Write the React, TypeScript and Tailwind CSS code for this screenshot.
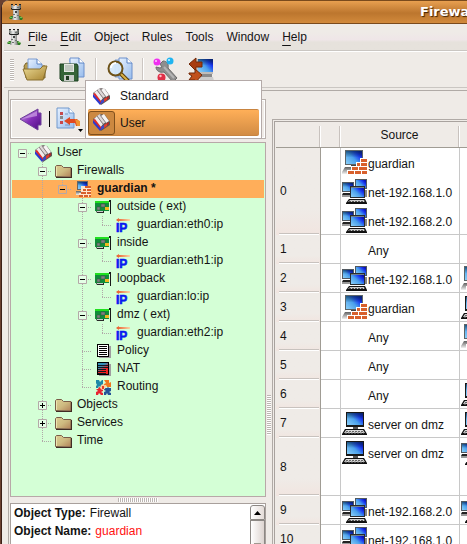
import React from "react";

/* ---------- shared gradients for the icon set ---------- */

function IconDefs() {
  return (
    <svg width="0" height="0" className="absolute" aria-hidden="true">
      <defs>
        <linearGradient id="screen" x1="0" y1="1" x2="1" y2="0.200">
          <stop offset="0" stopColor="#8cd0f8" />
          <stop offset="0.5" stopColor="#4aa0ec" />
          <stop offset="0.8" stopColor="#1838f0" />
          <stop offset="1" stopColor="#0a10b0" />
        </linearGradient>
        <linearGradient id="shade" x1="0" y1="0" x2="0" y2="1">
          <stop offset="0" stopColor="#083048" stopOpacity="0.65" />
          <stop offset="0.5" stopColor="#083048" stopOpacity="0" />
        </linearGradient>
        <linearGradient id="fade" x1="0" y1="0" x2="0" y2="1">
          <stop offset="0" stopColor="#606060" />
          <stop offset="1" stopColor="#f0f0f0" />
        </linearGradient>
        <linearGradient id="folderFill" x1="0" y1="0" x2="1" y2="1">
          <stop offset="0" stopColor="#dccf94" />
          <stop offset="0.5" stopColor="#ceba80" />
          <stop offset="1" stopColor="#b08058" />
        </linearGradient>
        <linearGradient id="gold" x1="0" y1="0" x2="1" y2="1">
          <stop offset="0" stopColor="#ecdc98" />
          <stop offset="1" stopColor="#a88430" />
        </linearGradient>
        <linearGradient id="paper" x1="0" y1="0" x2="1" y2="1">
          <stop offset="0" stopColor="#e8f2ff" />
          <stop offset="1" stopColor="#98bcec" />
        </linearGradient>
        <linearGradient id="purple" x1="0" y1="0" x2="1" y2="1">
          <stop offset="0" stopColor="#d8b0f0" />
          <stop offset="0.5" stopColor="#8430b8" />
          <stop offset="1" stopColor="#4c0c80" />
        </linearGradient>
        <linearGradient id="arrow" x1="0" y1="0" x2="1" y2="0">
          <stop offset="0" stopColor="#e85020" />
          <stop offset="1" stopColor="#f8d8a8" />
        </linearGradient>
        <linearGradient id="nat" x1="0" y1="0" x2="0.6" y2="1">
          <stop offset="0.35" stopColor="#3090b8" />
          <stop offset="0.7" stopColor="#f02020" />
        </linearGradient>
        <linearGradient id="stone" x1="0" y1="0" x2="1" y2="0">
          <stop offset="0" stopColor="#707470" />
          <stop offset="0.4" stopColor="#f0f0f0" />
          <stop offset="1" stopColor="#505450" />
        </linearGradient>
      </defs>
    </svg>
  );
}

/* ---------- icons ---------- */

function TowerIcon() {
  return (
    <svg width="14" height="18" viewBox="0 0 14 18" aria-hidden="true" className="shrink-0">
      <path d="M0 15l2-2h3v3H1zM9 13h2l3 2-1 2H9z" fill="#2e7c24" />
      <path d="M2 1h2v2h2V1h2v2h2V1h2v5l-2 1v6l1 4H3l1-4V7L2 6z" fill="url(#stone)" />
      <path d="M2 1h2v1H2zM6 1h2v1H6zM10 1h2v1h-2zM2 5h1v1h8V5h1v1l-1 1H3L2 6z" fill="#222" />
      <path d="M6 8h2v2H6z" fill="#444" />
      <path d="M4 11h2v1H4zM8 12h2v1H8zM5 14h2v1H5zM8 4h2v1H8z" fill="#707470" />
      <path d="M1 14h2v1H1zM11 14h2v1h-2z" fill="#6cc050" />
    </svg>
  );
}

function OpenIcon() {
  return (
    <svg width="26" height="26" viewBox="0 0 26 26" aria-hidden="true">
      <path d="M2 9l2-3h6l1 3h12v12H4z" fill="#b89c50" stroke="#7a6428" />
      <path d="M6 2h9l5 5v8H6z" fill="url(#paper)" stroke="#7c9cd0" />
      <path d="M15 2v5h5" fill="#fff" stroke="#5c84c4" />
      <path d="M1 12h17l3-3h4l-4 14H5z" fill="url(#gold)" stroke="#8a7030" />
    </svg>
  );
}

function SaveIcon() {
  return (
    <svg width="26" height="26" viewBox="0 0 26 26" aria-hidden="true">
      <path d="M10 2h3v3h-3z" fill="#aac8f0" />
      <path d="M11 1h9l5 5v14H11z" fill="url(#paper)" stroke="#6c90cc" />
      <path d="M20 1v5h5" fill="#fff" stroke="#5c84c4" />
      <path d="M1 7h17l1 2v15H3l-2-2z" fill="#356438" stroke="#1c4020" />
      <path d="M5 7h10v8H5z" fill="#e4e8e4" />
      <path d="M6 9h8M6 11h8M6 13h8" stroke="#9ca89c" />
      <path d="M5 18h10v6H5z" fill="#c8ccc8" />
      <path d="M7 19h3v4H7z" fill="#223c24" />
    </svg>
  );
}

function FindIcon() {
  return (
    <svg width="26" height="26" viewBox="0 0 26 26" aria-hidden="true">
      <path d="M8 3h8v17H8z" fill="#b0ccf0" stroke="#7c9cd0" />
      <path d="M12 1h8l5 5v16H12z" fill="url(#paper)" stroke="#6c90cc" />
      <path d="M20 1v5h5" fill="#fff" stroke="#5c84c4" />
      <path d="M14 17l7 7" stroke="#5a4010" strokeWidth="4" strokeLinecap="round" />
      <path d="M14 17l6 6" stroke="#d8b048" strokeWidth="2" strokeLinecap="round" />
      <circle cx="8.500" cy="11.500" r="7" fill="#d4e8fc" fillOpacity="0.92" stroke="#6e5218" strokeWidth="2" />
      <path d="M4 11a5 5 0 0 1 5-5" stroke="#fff" strokeWidth="2" fill="none" />
    </svg>
  );
}

function WrenchIcon() {
  return (
    <svg width="26" height="26" viewBox="0 0 26 26" aria-hidden="true">
      <path d="M7 7l3-3c4 0 6 3 5 7l9 10-4 4-9-10c-4 1-8-1-8-5l4 1 2-1z" fill="#8e8e8e" stroke="#6c6c6c" />
      <path d="M11 10l10 11" stroke="#b4b4b4" strokeWidth="2" />
      <circle cx="4" cy="5" r="3.500" fill="#f030f0" />
      <circle cx="3" cy="4" r="1" fill="#ffc8ff" />
      <circle cx="17" cy="4" r="3.500" fill="#20b4f0" />
      <circle cx="16" cy="3" r="1" fill="#d0f4ff" />
      <circle cx="8.500" cy="20.500" r="4" fill="#e03048" />
      <circle cx="7.500" cy="19" r="1.200" fill="#ffc0c8" />
    </svg>
  );
}

function InstallIcon() {
  return (
    <svg width="26" height="26" viewBox="0 0 26 26" aria-hidden="true">
      <path d="M9 2h16v15H9z" fill="#c0bcb8" />
      <path d="M10 2h15v13H10z" fill="url(#screen)" />
      <path d="M10 2h15v13H10z" fill="url(#shade)" />
      <path d="M10 17h14v3H10z" fill="#8a8a8a" />
      <path d="M12 20h13l1 4H12z" fill="#ccc" />
      <path d="M1 7l7-6v4h6v5H8v4z" fill="#a83c10" stroke="#702808" />
      <path d="M14 18l-7-6v4H1v1l3 2-3 4h6v3z" fill="#c0501c" stroke="#702808" />
    </svg>
  );
}

function BackIcon() {
  return (
    <svg width="24" height="24" viewBox="0 0 24 24" aria-hidden="true">
      <path d="M1 12L19 2v4h3v12h-3v5z" fill="url(#purple)" stroke="#6c4098" />
      <path d="M3 12L18 4v5z" fill="#d8b4ec" fillOpacity="0.600" />
    </svg>
  );
}

function NewObjectIcon() {
  return (
    <svg width="26" height="26" viewBox="0 0 26 26" aria-hidden="true">
      <path d="M1 2h12l5 5v15H1z" fill="url(#paper)" stroke="#7098cc" />
      <path d="M13 2v5h5" fill="#fff" stroke="#7098cc" />
      <path d="M4 6h3v3H4zM4 15h3v3H4z" fill="#c8484c" />
      <path d="M4 10h3v3H4z" fill="#888" />
      <path d="M9 8h3M9 19h5" stroke="#7898c0" />
      <path d="M8 15l6-4v2h7l3 3v4h-4l-1-3h-5v2z" fill="#e04820" />
      <path d="M19 13l5 2v5h-3z" fill="#ee9430" />
    </svg>
  );
}

function BooksIcon() {
  return (
    <svg width="17" height="17" viewBox="0 0 17 17" aria-hidden="true" className="shrink-0">
      <path d="M0 5l7 11 1 1 9-6V8l-5-7-5-1z" fill="#5c5454" />
      <path d="M1 5l3-3 6 8-3 4z" fill="#f0ecec" />
      <path d="M4 2l3-2 6 8-3 2z" fill="#ded8d8" />
      <path d="M8 2l3-2 5 7-3 2z" fill="#f6f4f4" />
      <path d="M4 2l6 8M7 1l6 8" stroke="#8a8080" />
      <path d="M0 6l2-1 6 8v3z" fill="#e02828" />
      <path d="M0 9l7 8 1-2-8-9z" fill="#2c38d0" />
      <path d="M8 13l3-2v3l-3 2z" fill="#4048c8" />
      <path d="M11 11l3-2v3l-3 2z" fill="#e03c2c" />
      <path d="M14 9l2-1v2l-2 2z" fill="#b02828" />
    </svg>
  );
}

function FolderIcon() {
  return (
    <svg width="17" height="14" viewBox="0 0 17 14" aria-hidden="true">
      <path d="M0.500 12.500v-10l1-1h5l2 2h7.500v9.500z" fill="url(#folderFill)" stroke="#7a5c48" />
      <path d="M1.500 3v9" stroke="#ece4b0" />
      <path d="M1 13.500h16M16.500 4v10" stroke="#402c24" />
    </svg>
  );
}

function Bricks() {
  return (
    <g fill="#d8602c">
      <path d="M19 9h6v3h-6zM15 13h3v3h-3zM19 13h6v3h-6zM10 17h6v3h-6zM17 17h8v3h-8zM6 21h6v3H6zM13 21h6v3h-6zM20 21h5v3h-5z" />
    </g>
  );
}

function SmallFirewallIcon() {
  return (
    <svg width="15" height="16" viewBox="0 0 15 16" aria-hidden="true">
      <path d="M1 0h11v9H1z" fill="#666" />
      <path d="M2 1h9v7H2z" fill="url(#screen)" />
      <path d="M2 1h9v7H2z" fill="url(#shade)" />
      <path d="M0 10h9v4H0z" fill="url(#fade)" />
      <path d="M5 5h10v11H3v-4h2z" fill="#ffe6cc" />
      <path d="M9 5h6v2H9zM7 8h3v2H7zM11 8h4v2h-4zM5 11h5v2H5zM11 11h4v2h-4zM3 14h4v2H3zM8 14h4v2H8zM13 14h2v2h-2z" fill="#d8602c" />
    </svg>
  );
}

function NicIcon() {
  return (
    <svg width="17" height="14" viewBox="0 0 17 14" aria-hidden="true">
      <path d="M0 1h14v10H0z" fill="#108c38" />
      <path d="M0 1h14v2H0z" fill="#20e020" />
      <path d="M2 7h3v3H2zM6 4h4v3H6z" fill="#7c8480" stroke="#404844" strokeWidth="0.500" />
      <path d="M10 7h4v3h-4z" fill="#f0b820" />
      <path d="M1 11h8v2H2z" fill="#282828" />
      <path d="M2 11h6v1H2z" fill="#ccc" />
      <path d="M14 0h2v14h-1V2h-1z" fill="#181818" />
    </svg>
  );
}

function IpIcon() {
  return (
    <svg width="15" height="16" viewBox="0 0 15 16" aria-hidden="true" className="overflow-visible">
      <path d="M0 3l3-2v1h11v2H3v1z" fill="url(#arrow)" />
      <text x="0" y="15" fill="#0818f0" stroke="#0818f0" strokeWidth="0.600" fontFamily="Liberation Sans, sans-serif" fontWeight="700" fontSize="12">
        IP
      </text>
    </svg>
  );
}

function PolicyIcon() {
  return (
    <svg width="14" height="14" viewBox="0 0 14 14" aria-hidden="true">
      <path d="M2 2h12v12H2z" fill="#a09ca0" />
      <path d="M0 0h12v13H0z" fill="#000" />
      <path d="M1 1h10v11H1z" fill="#fff" />
      <path d="M2 2.500h8M2 4.500h8M2 6.500h8M2 8.500h8M2 10.500h8" stroke="#000" />
    </svg>
  );
}

function NatIcon() {
  return (
    <svg width="14" height="14" viewBox="0 0 14 14" aria-hidden="true">
      <path d="M2 2h12v12H2z" fill="#a09ca0" />
      <path d="M0 0h12v13H0z" fill="#000" />
      <path d="M1 1h10v11H1z" fill="url(#nat)" />
      <path d="M1 3.500h10M1 5.500h10M1 7.500h8M1 9.500h8M1 11.500h8" stroke="#101820" />
    </svg>
  );
}

function RoutingIcon() {
  return (
    <svg width="15" height="15" viewBox="0 0 15 15" aria-hidden="true">
      <path d="M0 0h3l1 2 2-2h1v6l-3 1-1-1-1 2H0V6l1-1-1-2z" fill="#1c88a8" />
      <path d="M8 0h5v3l2-1v5h-4l-1-2-2 1V4l2-1z" fill="#f07820" />
      <path d="M0 9h2l1-2 2 1h2v3l-2 1 2 1v2H5l-2-2-1 2H0v-3l2-1z" fill="#e82430" />
      <path d="M8 8h3l1-1 1 1h2v3l-2 1 2 1v2h-3l-1-2-1 2H8v-3l2-1-2-1z" fill="#245498" />
      <path d="M5 5l2-1 3 2-1 3-3 1-2-2z" fill="#f8d0a0" />
      <path d="M6 6h2v3H6z" fill="#e83c28" />
    </svg>
  );
}

function HostIcon() {
  return (
    <svg width="25" height="25" viewBox="0 0 25 25" aria-hidden="true" className="shrink-0">
      <path d="M4 1h18v15H4z" fill="#181818" />
      <path d="M5 2h16v12H5z" fill="url(#screen)" />
      <path d="M5 2h16v12H5z" fill="url(#shade)" />
      <path d="M11 16h5v2h-5z" fill="#555" />
      <path d="M3 18h19l3 5v1H0v-1z" fill="#111" />
      <path d="M4 19h17l2 3H2z" fill="#d8d8d8" />
      <path d="M4 20.500h18" stroke="#666" strokeDasharray="2 1" />
      <path d="M3 22h19" stroke="#888" strokeDasharray="2 1" />
    </svg>
  );
}

function FirewallIcon() {
  return (
    <svg width="25" height="25" viewBox="0 0 25 25" aria-hidden="true" className="shrink-0">
      <path d="M3 0h18v15H3z" fill="#5c6468" />
      <path d="M4 1h16v13H4z" fill="url(#screen)" />
      <path d="M4 1h16v13H4z" fill="url(#shade)" />
      <path d="M9 15h6v2H9z" fill="#444" />
      <path d="M3 17h18l3 7H0v-2z" fill="url(#fade)" />
      <path d="M18 8h7v17H5v-5h4v-4h5v-4h4z" fill="#fff" />
      <Bricks />
    </svg>
  );
}

function NetIcon() {
  return (
    <svg width="25" height="25" viewBox="0 0 25 25" aria-hidden="true" className="shrink-0">
      <path d="M13 0h12v10H13z" fill="#505860" />
      <path d="M14 1h10v8H14z" fill="url(#screen)" />
      <path d="M0 3h12v10H0z" fill="#505860" />
      <path d="M1 4h10v8H1z" fill="url(#screen)" />
      <path d="M1 4h10v8H1z" fill="url(#shade)" />
      <path d="M1 14h9v2H0z" fill="#222" />
      <path d="M0 16h9v2H0z" fill="#999" />
      <path d="M22 11h3v7h-2z" fill="#888" />
      <path d="M8 7h15v12H8z" fill="#282c30" />
      <path d="M9 9h13v9H9z" fill="url(#screen)" />
      <path d="M9 8h13v1H9z" fill="#708088" />
      <path d="M7 20h16l2 4v1H4v-1z" fill="#111" />
      <path d="M8 21h14l1 2H6z" fill="#ccc" />
      <path d="M7 22.500h16" stroke="#555" strokeDasharray="2 1" />
    </svg>
  );
}

/* ---------- window chrome ---------- */

const menus = [
  { label: "File", mnemonic: true },
  { label: "Edit", mnemonic: true },
  { label: "Object", mnemonic: false },
  { label: "Rules", mnemonic: false },
  { label: "Tools", mnemonic: false },
  { label: "Window", mnemonic: false },
  { label: "Help", mnemonic: true },
];

function TitleBar() {
  return (
    <header className="flex h-6 shrink-0 items-center rounded-tl-md border-t border-b border-[#7a4a1c] bg-linear-to-b from-[#e8a050] via-[#bc762e] via-55% to-[#d28a3c] pl-[7px]">
      <TowerIcon />
      <h1 className="ml-auto w-[47px] font-['DejaVu_Sans',sans-serif] text-[13px] leading-5 font-bold whitespace-nowrap text-white [text-shadow:1px_1px_1px_#402000]">
        Firewall
      </h1>
    </header>
  );
}

function MenuBar() {
  return (
    <nav className="flex h-[27px] shrink-0 items-center gap-[13px] border-b border-[#cac6c2] bg-linear-to-b from-[#efebe7] from-30% via-[#efe6e8] via-60% to-[#e6e2dc] to-70% pl-[3px]">
      <span className="-mr-[6px]">
        <TowerIcon />
      </span>
      {menus.map((m) => (
        <button key={m.label} type="button" className="leading-4">
          {m.mnemonic ? (
            <>
              <span className="underline decoration-1 underline-offset-[4px]">{m.label[0]}</span>
              {m.label.slice(1)}
            </>
          ) : (
            m.label
          )}
        </button>
      ))}
    </nav>
  );
}

function Separator() {
  return <span className="h-6 w-[2px] border-l border-[#ccc6c2] bg-white" />;
}

function ToolBar() {
  return (
    <div className="flex h-[37px] shrink-0 items-center border-t border-b border-t-white border-b-[#cac6c2] pl-[6px]">
      <span className="mr-2 h-[22px] w-1 bg-[repeating-linear-gradient(#bcb6b2_0_1px,#fff_1px_2px)]" />
      <button type="button" aria-label="Open"><OpenIcon /></button>
      <button type="button" aria-label="Save" className="ml-[11px]"><SaveIcon /></button>
      <span className="mx-[10px] flex"><Separator /></span>
      <button type="button" aria-label="Find"><FindIcon /></button>
      <span className="mx-[9px] flex"><Separator /></span>
      <button type="button" aria-label="Compile"><WrenchIcon /></button>
      <button type="button" aria-label="Install" className="ml-[9px]"><InstallIcon /></button>
    </div>
  );
}

function LibraryMenu() {
  return (
    <div role="listbox" aria-label="Library" className="absolute top-[80px] left-[83px] flex w-[177px] flex-col border border-[#b4aaa8] bg-white p-[2px]">
      <button type="button" role="option" aria-selected="false" className="flex h-[26px] items-center pl-[5px]">
        <BooksIcon />
        <span className="ml-[10px]">Standard</span>
      </button>
      <button type="button" role="option" aria-selected="true" className="flex h-[27px] items-center rounded-xs border-t border-b border-[#c88440] bg-linear-to-b from-[#ffaf58] to-[#d28c44]">
        <span className="flex h-[24px] w-[27px] items-center justify-center rounded-[3px] border border-[#80501c] bg-[#cc8840]">
          <BooksIcon />
        </span>
        <span className="ml-[5px]">User</span>
      </button>
    </div>
  );
}

/* ---------- object tree ---------- */

type Cell = "blank" | "line" | "tee" | "end" | "minus" | "minusEnd" | "minusRoot" | "plus";
type TreeRow = { cells: Cell[]; icon: React.ReactNode; label: string; selected?: boolean };

const treeRows: TreeRow[] = [
  { cells: ["minusRoot"], icon: <BooksIcon />, label: "User" },
  { cells: ["blank", "minus"], icon: <FolderIcon />, label: "Firewalls" },
  { cells: ["blank", "line", "minusEnd"], icon: <SmallFirewallIcon />, label: "guardian *", selected: true },
  { cells: ["blank", "line", "blank", "minus"], icon: <NicIcon />, label: "outside ( ext)" },
  { cells: ["blank", "line", "blank", "line", "end"], icon: <IpIcon />, label: "guardian:eth0:ip" },
  { cells: ["blank", "line", "blank", "minus"], icon: <NicIcon />, label: "inside" },
  { cells: ["blank", "line", "blank", "line", "end"], icon: <IpIcon />, label: "guardian:eth1:ip" },
  { cells: ["blank", "line", "blank", "minus"], icon: <NicIcon />, label: "loopback" },
  { cells: ["blank", "line", "blank", "line", "end"], icon: <IpIcon />, label: "guardian:lo:ip" },
  { cells: ["blank", "line", "blank", "minus"], icon: <NicIcon />, label: "dmz ( ext)" },
  { cells: ["blank", "line", "blank", "line", "end"], icon: <IpIcon />, label: "guardian:eth2:ip" },
  { cells: ["blank", "line", "blank", "tee"], icon: <PolicyIcon />, label: "Policy" },
  { cells: ["blank", "line", "blank", "tee"], icon: <NatIcon />, label: "NAT" },
  { cells: ["blank", "line", "blank", "end"], icon: <RoutingIcon />, label: "Routing" },
  { cells: ["blank", "plus"], icon: <FolderIcon />, label: "Objects" },
  { cells: ["blank", "plus"], icon: <FolderIcon />, label: "Services" },
  { cells: ["blank", "end"], icon: <FolderIcon />, label: "Time" },
];

function Guide({ kind }: { kind: Cell }) {
  const box = kind === "plus" || kind.startsWith("minus");
  const up = kind !== "blank" && kind !== "minusRoot";
  const down = kind === "line" || kind === "tee" || kind === "minus" || kind === "plus";
  const across = kind !== "blank" && kind !== "line";
  const drawing = (
    <svg width="20" height="18" viewBox="0 0 20 18" aria-hidden="true">
      <g stroke="#b0a8a8" strokeDasharray="1 1" fill="none">
        {up && <path d="M10.500 0v10" />}
        {down && <path d="M10.500 10v8" />}
        {across && <path d="M10 9.500h10" />}
      </g>
      {box && <path d="M6.500 5.500h8v8h-8z" fill={kind === "minusEnd" ? "#ffae5a" : "#e4ffe6"} stroke="#b4a8a8" />}
      {box && <path d="M8 9.500h5" stroke="#000" />}
      {kind === "plus" && <path d="M10.500 7v5" stroke="#000" />}
    </svg>
  );
  return box ? (
    <button type="button" aria-label="Toggle" className="block shrink-0">{drawing}</button>
  ) : (
    <span className="block shrink-0">{drawing}</span>
  );
}

function ObjectTree() {
  return (
    <ul className="min-h-0 flex-1 overflow-hidden border border-[#b8a8a8] bg-[#d4ffd6] p-px">
      {treeRows.map((row) => (
        <li key={row.label} className={row.selected ? "flex h-[18px] items-center bg-[#ffae5a] font-bold" : "flex h-[18px] items-center"}>
          {row.cells.map((c, i) => (
            <Guide key={i} kind={c} />
          ))}
          <span className="flex w-[25px] shrink-0 items-center justify-center pr-[2px]">{row.icon}</span>
          <span className="pb-[2px] leading-4 whitespace-nowrap">{row.label}</span>
        </li>
      ))}
    </ul>
  );
}

function DetailsBox() {
  return (
    <section className="flex h-[41px] shrink-0 overflow-hidden border border-b-0 border-[#a8a09c] bg-white">
      <dl className="flex-1 pl-[3px] leading-[18px]">
        <div className="flex gap-1">
          <dt className="font-bold">Object Type:</dt>
          <dd>Firewall</dd>
        </div>
        <div className="flex gap-1">
          <dt className="font-bold">Object Name:</dt>
          <dd className="text-[#ff1010]">guardian</dd>
        </div>
      </dl>
      <div className="mt-px flex w-[15px] flex-col">
        <button type="button" aria-label="Scroll up" className="flex h-[15px] items-center justify-center rounded-t-[3px] border border-[#8c8884] bg-linear-to-r from-white to-[#e4dcd8]">
          <svg width="7" height="4" viewBox="0 0 7 4" aria-hidden="true"><path d="M3.500 0L7 4H0z" fill="#000" /></svg>
        </button>
        <div className="flex flex-1 items-end justify-center border border-b-0 border-[#8c8884] bg-linear-to-r from-white to-[#ddd4d0]">
          <span className="h-px w-[7px] bg-[#a09890]" />
        </div>
      </div>
    </section>
  );
}

function LeftPane() {
  return (
    <aside className="flex w-[256px] shrink-0 flex-col pt-2">
      <div className="mb-[3px] flex h-10 shrink-0 items-center border border-[#b8b0ac] pl-2 shadow-[inset_1px_1px_0_#fff,inset_-1px_-1px_0_#fff]">
        <button type="button" aria-label="Back"><BackIcon /></button>
        <span className="mx-[6px] h-4 w-px bg-black" />
        <button type="button" aria-label="New object" className="flex items-end">
          <NewObjectIcon />
          <svg width="5" height="3" viewBox="0 0 5 3" aria-hidden="true" className="-ml-[4px]"><path d="M0 0h5L2.500 3z" fill="#000" /></svg>
        </button>
      </div>
      <ObjectTree />
      <div className="flex h-[6px] shrink-0 items-center justify-center">
        <span className="h-1 w-10 bg-[repeating-linear-gradient(90deg,#bcb6b2_0_1px,#fff_1px_2px)]" />
      </div>
      <DetailsBox />
    </aside>
  );
}

/* ---------- rule table ---------- */

type Kind = "fw" | "net" | "host";
type Entry = { kind?: Kind; label: string };
type Rule = { height: string; source: Entry[]; dest?: Kind };

const one = "h-[29px]";
const two = "h-[58px]";
const three = "h-[87px]";

const rules: Rule[] = [
  {
    height: three,
    source: [
      { kind: "fw", label: "guardian" },
      { kind: "net", label: "net-192.168.1.0" },
      { kind: "net", label: "net-192.168.2.0" },
    ],
  },
  { height: one, source: [{ label: "Any" }] },
  { height: one, source: [{ kind: "net", label: "net-192.168.1.0" }], dest: "fw" },
  { height: one, source: [{ kind: "fw", label: "guardian" }], dest: "host" },
  { height: one, source: [{ label: "Any" }], dest: "fw" },
  { height: one, source: [{ label: "Any" }] },
  { height: one, source: [{ label: "Any" }], dest: "host" },
  { height: one, source: [{ kind: "host", label: "server on dmz" }], dest: "host" },
  { height: two, source: [{ kind: "host", label: "server on dmz" }], dest: "net" },
  { height: one, source: [{ kind: "net", label: "net-192.168.2.0" }], dest: "net" },
  { height: one, source: [{ kind: "net", label: "net-192.168.1.0" }] },
];

function ObjectIcon({ kind }: { kind?: Kind }) {
  if (kind === "fw") return <FirewallIcon />;
  if (kind === "net") return <NetIcon />;
  if (kind === "host") return <HostIcon />;
  return <span className="w-[25px] shrink-0" />;
}

function HeaderCell({ children, last }: { children?: React.ReactNode; last?: boolean }) {
  return (
    <th scope="col" className="h-[26px] border-b border-[#a09c94] p-0 pt-1 font-normal">
      <div className={last ? "h-[21px]" : "mr-px h-[21px] border-r border-[#c8c2be] leading-[19px] shadow-[1px_0_0_#fff]"}>{children}</div>
    </th>
  );
}

function RuleTable() {
  return (
    <div className="min-w-0 flex-1 overflow-hidden border-t border-l border-[#b0aaa6] pt-px pl-px">
      <div className="h-full overflow-hidden border-t border-l border-[#a8a29e] pl-px">
        <table className="w-full table-fixed border-separate border-spacing-0">
          <colgroup>
            <col className="w-[45px]" />
            <col className="w-5" />
            <col className="w-[119px]" />
            <col />
          </colgroup>
          <thead>
            <tr>
              <HeaderCell />
              <HeaderCell />
              <HeaderCell>Source</HeaderCell>
              <HeaderCell last />
            </tr>
          </thead>
          <tbody>
            {rules.map((rule, n) => (
              <tr key={n} className="bg-white">
                <th scope="row" className="border-r border-[#a09c94] bg-linear-to-b from-[#efebe7] from-70% to-[#f1e5e0] p-0 text-left font-normal">
                  <div className={`${rule.height} mr-px ml-[3px] flex items-center border-b border-white pl-px shadow-[inset_0_-1px_0_#c8c2be]`}>{n}</div>
                </th>
                <td className="border-r border-b border-[#c8c8c8] p-0" />
                <td className="border-r border-b border-[#c8c8c8] p-0 pl-px align-top">
                  <ul className="flex flex-col gap-px">
                    {rule.source.map((e) => (
                      <li key={e.label} className="flex h-[28px] items-center gap-px whitespace-nowrap">
                        <ObjectIcon kind={e.kind} />
                        <span className="pt-1 leading-4">{e.label}</span>
                      </li>
                    ))}
                  </ul>
                </td>
                <td className="overflow-hidden border-b border-[#c8c8c8] p-0 pl-px align-top">
                  <div className="flex h-[28px] items-center overflow-hidden">
                    <ObjectIcon kind={rule.dest} />
                  </div>
                </td>
              </tr>
            ))}
          </tbody>
        </table>
      </div>
    </div>
  );
}

/* ---------- main window ---------- */

export default function App() {
  return (
    <div className="flex h-screen overflow-hidden bg-[#6a4030] font-['Liberation_Sans',Arial,sans-serif] text-[12px] text-[#141414]">
      <IconDefs />
      <div className="w-px shrink-0" />
      <div className="relative flex min-w-0 flex-1 flex-col overflow-hidden rounded-tl-lg border-l border-[#3c2018] bg-[#efebe7]">
        <TitleBar />
        <div className="flex min-h-0 flex-1 flex-col pl-px">
          <div className="flex min-h-0 flex-1 flex-col pl-px">
            <MenuBar />
            <ToolBar />
            <main className="mt-[2px] ml-1 flex min-h-0 flex-1 border-t border-l border-[#b0aaa6] pl-px">
              <LeftPane />
              <div className="flex w-[6px] shrink-0 items-center justify-center pt-[194px]">
                <span className="h-10 w-1 bg-[repeating-linear-gradient(#bcb6b2_0_1px,#fff_1px_2px)]" />
              </div>
              <div className="flex min-w-0 flex-1 pt-[28px]">
                <RuleTable />
              </div>
            </main>
          </div>
        </div>
        <LibraryMenu />
      </div>
    </div>
  );
}
